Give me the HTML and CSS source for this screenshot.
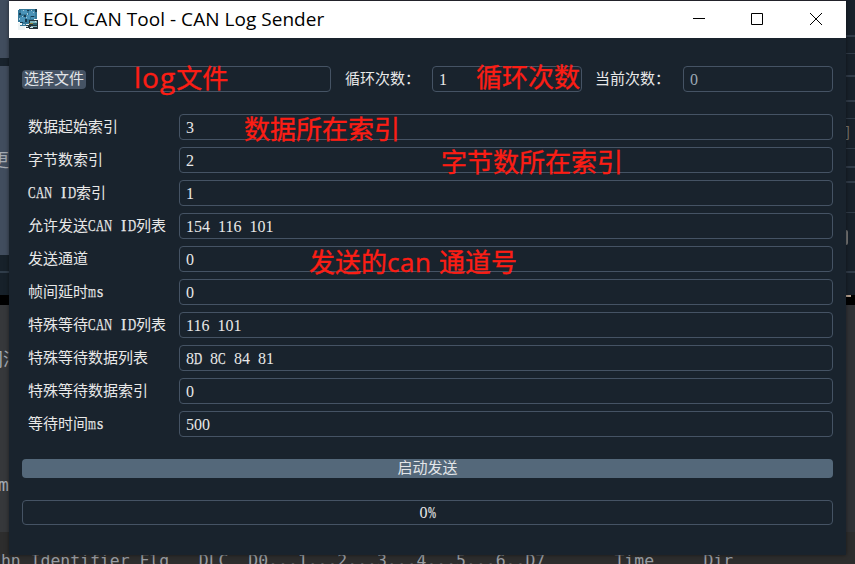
FILE: index.html
```html
<!DOCTYPE html>
<html lang="zh-CN">
<head>
<meta charset="utf-8">
<title>EOL CAN Tool - CAN Log Sender</title>
<link rel="stylesheet" href="styles.css">
</head>
<body>
<div class="desktop">
  <div class="side side-left"></div>
  <div class="side side-right"></div>
  <span class="behind b-geng">更</span>
  <span class="behind b-run">闭消</span>
  <span class="behind b-m">m</span>
  <span class="behind b-right">间</span>
  <span class="behind b-pill"></span>
  <span class="behind b-dash"></span>
  <pre class="behind trace">Chn Identifier Flg   DLC  D0...1...2...3...4...5...6..D7       Time     Dir</pre>
</div>
<main class="window">
  <header class="titlebar">
    <svg class="logo" width="21" height="21" viewBox="0 0 21 21" shape-rendering="crispEdges">
      <path fill="#347899" d="M1 0h18v10h-3v7H2v-4H0V1z"/>
      <path fill="#4a93b8" d="M3 1h6v4H3zM11 2h6v5h-6zM2 8h5v5H2zM8 6h4v4H8zM13 8h4v2h-4z"/>
      <path fill="#173b50" d="M1 4h2v2H1zM6 6h2v2H6zM13 7h3v1h-3zM9 1h2v1H9zM17 0h2v3h-2zM2 13h3v1H2zM7 10h2v3H7z"/>
      <path fill="#a8c9d8" d="M5 1h1v1H5zM9 4h1v2H9zM4 7h1v1H4zM15 3h1v1h-1zM8 8h1v1H8zM1 9h1v2H1zM13 1h1v1h-1zM5 15h2v1H5z"/>
      <path fill="#eef4f5" d="M2 14h2v2H2zM0 14h2v3H0zM0 17h7v4H0zM8 15h3v1H8z"/>
      <path fill="#23343b" d="M11 11h9v9h-9zM8 16h4v3H8z"/>
      <path fill="#7fb4bd" d="M12 12h7v2h-7zM13 17h6v1h-6z"/>
      <path fill="#8f8a45" d="M11 14h6v1h-6z"/>
      <path fill="#2c6572" d="M15 14h4v2h-4z"/>
      <path fill="#d6e6e8" d="M8 17h2v1H8zM12 18h3v1h-3zM17 12h1v1h-1z"/>
    </svg>
    <h1>EOL CAN Tool - CAN Log Sender</h1>
    <svg class="controls" width="134" height="14" viewBox="0 0 134 14" fill="none" stroke="#000">
      <path d="M1 6.500h12M59.500 1.500h11v11h-11z"/>
      <path d="M118 1l12 12M130 1l-12 12"/>
    </svg>
  </header>
  <section class="content">
    <div class="filebar">
      <button class="btn choose">选择文件</button>
      <div class="field path"></div>
      <span class="label loops">循环次数：</span>
      <div class="field count">1</div>
      <span class="label now">当前次数：</span>
      <div class="field count disabled">0</div>
    </div>
    <div class="form">
      <span class="label">数据起始索引</span><div class="field">3</div>
      <span class="label">字节数索引</span><div class="field">2</div>
      <span class="label"><i>C</i><i>A</i><i>N</i> <i class="n">I</i><i>D</i>索引</span><div class="field">1</div>
      <span class="label">允许发送<i>C</i><i>A</i><i>N</i> <i class="n">I</i><i>D</i>列表</span><div class="field">154 116 101</div>
      <span class="label">发送通道</span><div class="field">0</div>
      <span class="label">帧间延时<i class="m">m</i><i class="n">s</i></span><div class="field">0</div>
      <span class="label">特殊等待<i>C</i><i>A</i><i>N</i> <i class="n">I</i><i>D</i>列表</span><div class="field">116 101</div>
      <span class="label">特殊等待数据列表</span><div class="field">8<i>D</i> 8<i>C</i> 84 81</div>
      <span class="label">特殊等待数据索引</span><div class="field">0</div>
      <span class="label">等待时间<i class="m">m</i><i class="n">s</i></span><div class="field">500</div>
    </div>
    <button class="btn start">启动发送</button>
    <div class="progress">0<i class="pct">%</i></div>
  </section>
</main>
<div class="note n1"><span class="latin">log</span>文件</div>
<div class="note n2">循环次数</div>
<div class="note n3">数据所在索引</div>
<div class="note n4">字节数所在索引</div>
<div class="note n5">发送的<span class="can">can </span>通道号</div>
</body>
</html>
```
FILE: styles.css
```css
* { box-sizing: border-box; }
body {
  margin: 0;
  width: 855px;
  height: 564px;
  overflow: hidden;
  position: relative;
  background: #2d2d2d;
  font: 15px/26px "Liberation Serif", "Noto Sans CJK SC", serif;
}

/* Windows visible behind the dialog */
.desktop {
  position: absolute;
  inset: 0;
  overflow: hidden;
  background: linear-gradient(#2b2b35 0 1px, #2d2d2d 1px);
}
.side { position: absolute; top: 0; height: 564px; width: 9px; }
.side-left {
  left: 0;
  background: linear-gradient(#414d5e 0 58px, #19232d 58px 66px, #414d5e 66px 255px, #17212a 255px 271px, #303d4a 271px 273px, #17212a 273px 295px, #000 295px 305px, #36383b 305px 532px, #2d2d2d 532px);
}
.side-right {
  right: 0;
  background: linear-gradient(#18212b 0 35px, #303b48 35px 37px, #18212b 37px 53px, #303b48 53px 54px, #18212b 54px 75px, #303b48 75px 77px, #18212b 77px 100px, #303b48 100px 102px, #18212b 102px 118px, #303b48 118px 119px, #18212b 119px 148px, #303b48 148px 149px, #18212b 149px 166px, #303b48 166px 168px, #18212b 168px 181px, #303b48 181px 183px, #18212b 183px 212px, #303b48 212px 213px, #18212b 213px 271px, #303b48 271px 273px, #18212b 273px 295px, #000 295px 305px, #303236 305px 532px, #2d2d2d 532px);
}
.behind { position: absolute; color: #a5abb3; margin: 0; }
.b-geng { left: -9px; top: 148px; font-size: 18px; }
.b-run { left: -15px; top: 347px; font-size: 18px; }
.b-m { left: -2px; top: 472px; font: 18px/26px "DejaVu Sans Mono", monospace; }
.b-right { left: 835px; top: 120px; color: #77746e; }
.b-pill { left: 844px; top: 230px; width: 4px; height: 15px; background: #777; border-radius: 2px; }
.b-dash { left: 846px; top: 295px; width: 5px; height: 2px; background: #b09c8c; }
.trace { left: -9px; top: 551px; font: 16.45px/20px "DejaVu Sans Mono", monospace; color: #999da3; }

.window {
  position: relative;
  width: 837px;
  height: 554px;
  margin: 1px 0 0 9px;
  background: #19232d;
  box-shadow: 0 0 4px rgba(0, 0, 0, .5);
  float: left;
}
.titlebar {
  display: flex;
  align-items: center;
  height: 37px;
  padding: 0 20px 0 9px;
  background: #fff;
}
h1 {
  flex: 1;
  margin: 0 0 2px 4px;
  font: 19px/34px "Open Sans", sans-serif;
  letter-spacing: .04px;
  white-space: nowrap;
  color: #000;
}
.controls { margin-bottom: 1px; }
.content { padding: 28px 13px 0; color: #e8e8e8; }
.filebar { display: flex; align-items: center; }
.btn {
  border: 0;
  padding: 0;
  border-radius: 4px;
  color: #e2e5e8;
  font: 15px/19px "Liberation Serif", "Noto Sans CJK SC", serif;
  height: 19px;
}
.choose { width: 64px; margin-right: 7px; background: #455364; }
.field {
  height: 26px;
  padding: 0 6px;
  border: 1px solid #455364;
  border-radius: 4px;
  font-size: 16px;
  line-height: 26px;
  word-spacing: 4px;
}
.path { width: 238px; }
.count { width: 150px; }
.disabled { color: #9da9b5; }
.label { white-space: nowrap; word-spacing: 4.25px; line-height: 27px; height: 26px; }
.loops { width: 87px; margin-left: 14px; }
.now { width: 87px; margin-left: 14px; position: relative; left: -1px; }
.form {
  display: grid;
  grid-template-columns: 157px 1fr;
  row-gap: 7px;
  margin-top: 22px;
}
.form .label { padding-left: 6px; }

/* Half-width glyph cell */
i {
  display: inline-block;
  width: 8px;
  font-size: 16px;
  line-height: 20px;
  font-style: normal;
  transform: scaleX(.7);
  transform-origin: 0 50%;
  -webkit-text-stroke: .25px;
}
i.n { transform: none; padding-left: 1px; }
i.m { transform: scaleX(.64); }
i.pct { transform: scaleX(.6); }

.start { display: block; width: 100%; margin-top: 22px; background: #54687a; }
.progress {
  height: 25px;
  margin-top: 22px;
  border: 1px solid #455364;
  border-radius: 4px;
  font-size: 16px;
  line-height: 23px;
  text-align: center;
}

/* Red annotations over the dialog */
.note {
  position: absolute;
  color: #fc1d14;
  font: 26px/34px "Open Sans", "Noto Sans CJK SC", sans-serif;
  white-space: nowrap;
  -webkit-text-stroke: .35px #fc1d14;
}
.latin { font-size: 28px; letter-spacing: 1px; line-height: 30px; }
.can { letter-spacing: .6px; }
.n1 { left: 134px; top: 61px; }
.n2 { left: 476px; top: 60px; }
.n3 { left: 244px; top: 112px; }
.n4 { left: 441px; top: 145px; }
.n5 { left: 309px; top: 245px; }
```
